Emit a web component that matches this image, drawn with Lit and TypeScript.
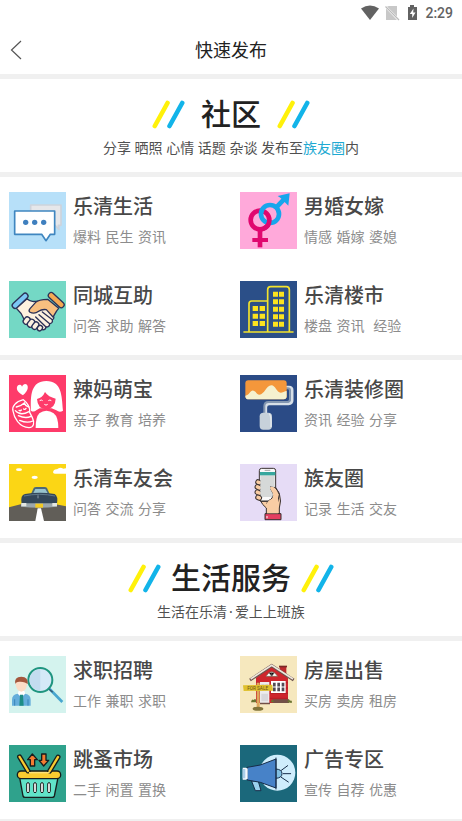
import { LitElement, html, css, svg } from "lit";
import type { SVGTemplateResult } from "lit";
import { customElement, property } from "lit/decorators.js";

interface Entry {
  title: string;
  tags: string;
  icon: string;
}

/* Tile drawings share a 171 x 171 canvas. */
const drawings: Record<string, SVGTemplateResult> = {
  chat: svg`
    <rect width="171" height="171" fill="#b7e0f9"/>
    <path d="M65 39H156V100H148L150 112L138 100H65Z" fill="#e6e7ea" stroke="#cdd3dc" stroke-width="5" stroke-linejoin="round"/>
    <path d="M17 57H137V127H124L111 146L98 127H17Z" fill="#fff" stroke="#3f86c0" stroke-width="5" stroke-linejoin="round"/>
    <g fill="#3f80bf"><circle cx="50" cy="91" r="8"/><circle cx="77" cy="91" r="8"/><circle cx="104" cy="91" r="8"/></g>`,
  handshake: svg`
    <rect width="171" height="171" fill="#74d8c5"/>
    <g stroke="#2b3157" stroke-width="4" stroke-linejoin="round" stroke-linecap="round">
      <path d="M22 82L54 53C66 64 76 62 88 60L120 84L132 104Q138 112 130 116Q132 127 122 128Q122 138 111 138Q109 148 99 146L88 142L46 116Q38 96 22 82Z" fill="#fdf1df"/>
      <path d="M116 55L149 82C138 94 136 104 132 108L112 86Q98 84 89 91Q76 101 62 93Q58 89 63 83L80 64Q88 56 116 55Z" fill="#f8bf80"/>
      <path d="M100 93L130 116M90 101L122 128M80 108L111 138" fill="none"/>
      <g fill="#fdf1df">
        <rect x="45" y="107" width="17" height="23" rx="8" transform="rotate(38 53 118)"/>
        <rect x="58" y="114" width="17" height="25" rx="8" transform="rotate(38 66 126)"/>
        <rect x="71" y="122" width="16" height="24" rx="8" transform="rotate(38 79 134)"/>
        <rect x="86" y="133" width="14" height="17" rx="7" transform="rotate(38 93 141)"/>
      </g>
      <rect x="4" y="51" width="58" height="17" rx="8" fill="#7cc7f5" transform="rotate(-43 33 59)"/>
      <rect x="113" y="49" width="58" height="17" rx="8" fill="#f4a953" transform="rotate(43 142 57)"/>
    </g>`,
  gender: svg`
    <rect width="171" height="171" fill="#ffa9da"/>
    <g fill="none" stroke-width="14">
      <circle cx="60" cy="84" r="28" stroke="#e0086f"/>
      <path d="M60 112V166" stroke="#e0086f"/>
      <path d="M37 144H84" stroke="#e0086f" stroke-width="12"/>
      <circle cx="90" cy="66" r="27" stroke="#17a6ec"/>
      <path d="M109 46L134 20" stroke="#17a6ec"/>
      <path d="M88 84A28 28 0 0 1 70 110" stroke="#e0086f"/>
    </g>
    <path d="M113 12L149 4L145 41L133 29L123 19Z" fill="#17a6ec"/>`,
  building: svg`
    <rect width="171" height="171" fill="#2b4f88"/>
    <path d="M83 151V26Q83 17 92 17H139Q148 17 148 26V151M27 151V68Q27 60 35 60H83M12 153H159" fill="none" stroke="#f3e32c" stroke-width="5" stroke-linecap="round"/>
    <path d="M99 32h15v15h-15zM117 32h15v15h-15zM99 55h15v15h-15zM117 55h15v15h-15zM99 77h15v15h-15zM117 77h15v15h-15zM99 100h15v15h-15zM117 100h15v15h-15zM99 122h15v15h-15zM117 122h15v15h-15zM38 75h16v15h-16zM59 75h16v15h-16zM38 98h16v15h-16zM59 98h16v15h-16zM38 120h16v15h-16zM59 120h16v15h-16z" fill="#fbe21f"/>`,
  mother: svg`
    <rect width="171" height="171" fill="#fe3b6a"/>
    <path d="M42 61C28 52 22 45 24 36C27 27 37 28 39 35C43 25 54 25 56 34C58 45 50 54 42 61Z" fill="#fff"/>
    <path d="M66 107C64 60 66 19 112 18C158 18 158 60 162 107Q152 114 142 106L128 100H92L82 106Q74 113 66 107Z" fill="#fff"/>
    <path d="M84 72Q101 68 108 51Q118 66 140 71Q139 101 111 103Q86 102 84 72Z" fill="#fe3b6a"/>
    <path d="M76 162Q76 124 89 110Q98 102 111 102Q126 102 136 110Q151 124 151 162Z" fill="#fe3b6a"/>
    <path d="M80 159Q80 126 91 115Q101 108 112 107Q124 108 134 115Q148 126 148 159Z" fill="#fff"/>
    <path d="M92 77q5-4 9 0M118 77q5-4 9 0M106 88q5 5 10 0" fill="none" stroke="#fff" stroke-width="3"/>
    <g fill="none" stroke="#fff" stroke-width="4" stroke-linecap="round">
      <path d="M43 74C20 80 8 94 12 108C15 128 30 156 60 158C74 158 78 144 70 128L62 112C64 96 56 84 43 74Z"/>
      <path d="M19 107Q34 124 60 110M22 96Q38 92 46 84Q50 94 60 96M30 106q4 3 7-1M44 102q4 3 7-2M28 122Q50 132 66 124M32 136Q54 146 72 138"/>
    </g>`,
  car: svg`
    <rect width="171" height="171" fill="#fbd615"/>
    <g fill="#fff"><ellipse cx="30" cy="17" rx="9" ry="4"/><ellipse cx="77" cy="40" rx="9" ry="5"/><path d="M132 24Q134 14 144 16Q152 8 163 14L171 13V29H140Q132 30 132 24Z"/></g>
    <path d="M0 130L35 121H140L171 127V171H0Z" fill="#615e58"/>
    <path d="M86 133H96L105 171H79Z" fill="#fff"/>
    <path d="M66 90L74 72Q76 69 82 69H106Q112 69 114 72L122 90Z" fill="#4b6878"/>
    <path d="M72 89L79 75H109L117 89Z" fill="#98c3cd"/>
    <path d="M38 119Q33 94 48 90Q92 82 137 90Q148 97 144 119L140 127H42Z" fill="#33475a"/>
    <path d="M45 96Q92 86 138 96" fill="none" stroke="#60798a" stroke-width="3"/>
    <path d="M36 118H144V128Q90 134 36 128Z" fill="#9ba7ad"/>
    <path d="M37 117h15v10h-15zM130 117h14v10h-14z" fill="#e3e6e2"/>
    <path d="M79 119h23v12h-23z" fill="#f3cb22"/><path d="M87 94v9" stroke="#b7c6ce" stroke-width="2"/>`,
  roller: svg`
    <rect width="171" height="171" fill="#2b4b86"/>
    <path d="M137 37H147Q156 37 156 46V76Q156 86 146 86H88Q77 86 77 97V116" fill="none" stroke="#d7dfe7" stroke-width="9"/>
    <path d="M137 40H143Q150 40 150 47V73Q150 81 142 81H86Q73 81 73 94V116" fill="none" stroke="#8396b0" stroke-width="6"/>
    <rect x="16" y="16" width="124" height="57" rx="9" fill="#f4973b"/>
    <path d="M16 62C27 63 31 45 40 47C49 48 48 59 58 59C74 59 78 31 94 31C107 31 110 54 123 53C132 52 133 48 140 48V64Q140 73 131 73H25Q16 73 16 62Z" fill="#f5f1cf"/>
    <rect x="59" y="113" width="37" height="51" rx="11" fill="#c7d1da"/><path d="M88 116Q94 122 93 156" fill="none" stroke="#e4e9ed" stroke-width="4"/>`,
  phone: svg`
    <rect width="171" height="171" fill="#e6dcf6"/>
    <g stroke="#38302f" stroke-width="3" stroke-linejoin="round">
      <path d="M58 104Q68 125 79 132V151H118V132Q125 112 118 88L104 66V112H62Z" fill="#f9cda4"/>
      <rect x="58" y="13" width="49" height="98" rx="7" fill="#fafafa"/>
      <path d="M118 92Q108 66 93 66Q87 67 89 74L97 88Q101 104 87 109L80 118H112Z" fill="#f9cda4"/>
      <g fill="#f9cda4"><rect x="47" y="48" width="18" height="14" rx="7" transform="rotate(24 56 55)"/><rect x="45" y="63" width="20" height="14" rx="7" transform="rotate(24 55 70)"/><rect x="45" y="79" width="20" height="14" rx="7" transform="rotate(24 55 86)"/><rect x="47" y="94" width="18" height="14" rx="7" transform="rotate(24 56 101)"/></g>
      <rect x="75" y="149" width="48" height="18" fill="#e43e60"/>
    </g>
    <path d="M61 34H104V70L90 67L91 76L99 91L97 99H66L61 92Z" fill="#d6d9d8"/><rect x="60" y="24" width="46" height="10" fill="#37a79e"/><path d="M74 19h17" stroke="#777" stroke-width="2"/><path d="M81 156v7" stroke="#fff" stroke-width="3"/>
    <path d="M80 118Q89 105 98 104L114 96V148H81V132Z" fill="#f9cda4"/>`,
  recruit: svg`
    <rect width="171" height="171" fill="#d4f3ee"/>
    <path d="M119 96L160 138" stroke="#48a6cf" stroke-width="8"/><path d="M119 98L131 109" stroke="#33566f" stroke-width="4"/>
    <circle cx="94" cy="72" r="36" fill="#d5e9f7" stroke="#1f957f" stroke-width="6"/>
    <path d="M94 40A32 32 0 0 0 94 104Z" fill="#c3dcf0"/>
    <path d="M9 149V131Q9 116 25 113H49Q65 116 65 131V149Z" fill="#65aedb"/>
    <path d="M26 113L37 124L49 113L46 105H29Z" fill="#fff"/><path d="M33 116H42L44 149H31Z" fill="#1d8d85"/>
    <path d="M17 130V149M57 130V149" stroke="#3884b9" stroke-width="3"/>
    <path d="M20 80Q20 68 37 67Q54 68 54 80Q55 104 37 107Q20 104 20 80Z" fill="#fcdcc6"/>
    <path d="M19 85Q14 62 37 62Q59 62 56 85Q49 76 31 77Q20 77 19 85Z" fill="#a4573d"/>`,
  house: svg`
    <rect width="171" height="171" fill="#f6e8be"/>
    <path d="M119 31H139V75H119Z" fill="#bd2a2d"/><path d="M117 29h24v5h-24z" fill="#7b2926"/>
    <path d="M48 65L95 31L144 65V141H48Z" fill="#ce252d"/>
    <path d="M48 80H144M48 96H144M48 112H144M48 127H144" stroke="#a71d26" stroke-width="2"/>
    <path d="M30 72L95 29L161 72" fill="none" stroke="#6b514c" stroke-width="9"/><path d="M32 69L95 28L159 69" fill="none" stroke="#eee6dc" stroke-width="5"/>
    <path d="M78 61Q95 33 113 61Z" fill="#fff" stroke="#765" stroke-width="2"/><path d="M95 47V61M87 50L95 61L103 50" stroke="#766" stroke-width="2"/>
    <path d="M60 78h28v63h-28z" fill="#ececed"/><path d="M64 84h9v21h-9zM76 84h8v21h-8zM64 113h20v23h-20z" fill="#d8d8db"/>
    <path d="M93 75h44v36h-44z" fill="#fff"/><path d="M99 80h8v26h-8zM112 80h8v26h-8zM125 80h8v26h-8z" fill="#514a55"/><path d="M97 93h39" stroke="#fff" stroke-width="3"/>
    <path d="M60 140h30v5h-30zM98 130h49v11h-49z" fill="#725047"/>
    <path d="M33 139q2-12 8-7q7-8 9 7zM92 139q3-12 9-5v5zM142 139q4-14 8-5q8-2 5 7z" fill="#697331"/>
    <path d="M50 80h9v82h-9z" fill="#dda95e"/><ellipse cx="54" cy="158" rx="16" ry="6" fill="#81743b"/>
    <path d="M9 88L97 86L99 104L11 105Z" fill="#dfc02d"/><text x="53" y="101" text-anchor="middle" font-family="Roboto, sans-serif" font-size="14" fill="#68511c">FOR SALE</text>`,
  basket: svg`
    <rect width="171" height="171" fill="#2fa28c"/>
    <g stroke="#171d1c" stroke-width="4" stroke-linejoin="round">
      <path d="M32 98H147L136 153Q135 157 130 157H48Q43 157 42 153Z" fill="#61e3c8"/>
      <rect x="25" y="78" width="130" height="23" rx="11" fill="#f9cb30"/>
      <rect x="39" y="27" width="11" height="60" rx="5" fill="#f9cb30" transform="rotate(-31 44 57)"/>
      <rect x="129" y="27" width="11" height="60" rx="5" fill="#f9cb30" transform="rotate(31 134 57)"/>
      <path d="M70 27L85 44H77V63H64V44H56Z" fill="#f47c32"/>
      <path d="M104 63L119 46H111V27H98V46H90Z" fill="#f47c32"/>
      <g fill="#fff" stroke-width="3"><rect x="53" y="113" width="8" height="30" rx="4"/><rect x="74" y="113" width="8" height="30" rx="4"/><rect x="95" y="113" width="8" height="30" rx="4"/><rect x="116" y="113" width="8" height="30" rx="4"/></g>
    </g>
    <path d="M60 83H122" stroke="#fbe078" stroke-width="4"/>`,
  megaphone: svg`
    <rect width="171" height="171" fill="#1b687b"/>
    <circle cx="112" cy="83" r="54" fill="#ceedfc"/>
    <g stroke="#172d49" stroke-width="3" stroke-linejoin="round" stroke-linecap="round">
      <path d="M35 109L46 137L63 137L55 109Z" fill="#9bd0ed"/>
      <path d="M108 72Q126 73 126 86Q126 99 108 100Z" fill="#82c0e2"/>
      <path d="M22 67L61 60L108 42V129L61 112L22 105Z" fill="#4782c8"/>
      <path d="M108 39V132M124 76L143 62M130 86H152M124 97L145 111" fill="none"/>
    </g>
    <path d="M8 68H18L23 71V101L18 104H8Z" fill="#f6faff"/><path d="M8 72h8v28h-8z" fill="#aacfe9"/>`,
};

const lifeTop: Entry[] = [
  { title: "乐清生活", tags: "爆料 民生 资讯", icon: "chat" },
  { title: "男婚女嫁", tags: "情感 婚嫁 婆媳", icon: "gender" },
  { title: "同城互助", tags: "问答 求助 解答", icon: "handshake" },
  { title: "乐清楼市", tags: "楼盘 资讯  经验", icon: "building" },
];

const lifeBottom: Entry[] = [
  { title: "辣妈萌宝", tags: "亲子 教育 培养", icon: "mother" },
  { title: "乐清装修圈", tags: "资讯 经验 分享", icon: "roller" },
  { title: "乐清车友会", tags: "问答 交流 分享", icon: "car" },
  { title: "族友圈", tags: "记录 生活 交友", icon: "phone" },
];

const services: Entry[] = [
  { title: "求职招聘", tags: "工作 兼职 求职", icon: "recruit" },
  { title: "房屋出售", tags: "买房 卖房 租房", icon: "house" },
  { title: "跳蚤市场", tags: "二手 闲置 置换", icon: "basket" },
  { title: "广告专区", tags: "宣传 自荐 优惠", icon: "megaphone" },
];

@customElement("section-banner")
export class SectionBanner extends LitElement {
  @property() heading = "";
  @property({ type: Boolean, reflect: true }) compact = false;

  static styles = css`
    :host { display: block; background: #fff; padding: 17px 0 13px; text-align: center; }
    .row { display: flex; justify-content: center; align-items: center; gap: 16px; }
    :host([compact]) .row { gap: 10px; }
    .heading { margin: 0; font-size: 30px; line-height: 36px; font-weight: 500; color: #222; }
    .slashes { width: 33px; height: 29px; }
    .note { margin: 0; padding-top: 5px; font-size: 14px; line-height: 22px; color: #505050; }
  `;

  private slashes() {
    return html`<svg class="slashes" viewBox="0 0 33 29" aria-hidden="true">
      <g stroke-width="4.600" stroke-linecap="round">
        <path d="M2.800 26L15.500 3" stroke="#fff10a" />
        <path d="M17.500 26L30.200 3" stroke="#12b4e9" />
      </g>
    </svg>`;
  }

  render() {
    return html`
      <div class="row">${this.slashes()}<h2 class="heading">${this.heading}</h2>${this.slashes()}</div>
      <p class="note"><slot></slot></p>
    `;
  }
}

@customElement("entry-grid")
export class EntryGrid extends LitElement {
  @property({ attribute: false }) entries: Entry[] = [];

  static styles = css`
    :host { display: block; background: #fff; }
    .grid { display: grid; grid-template-columns: 1fr 1fr; row-gap: 32px; padding: 15px 0 17px; }
    .entry { display: flex; gap: 7px; padding-left: 9px; color: inherit; text-decoration: none; }
    .icon { flex: none; width: 57px; height: 57px; }
    .text { display: flex; flex-direction: column; gap: 3px; white-space: pre; }
    .title { font-size: 20px; line-height: 30px; font-weight: 500; color: #484848; }
    .tags { font-family: "DejaVu Sans", "Noto Sans CJK SC", sans-serif; font-size: 14px; line-height: 24px; color: #8c8c8c; }
  `;

  render() {
    return html`<nav class="grid">
      ${this.entries.map(
        (e) => html`<a class="entry" href="#${e.icon}">
          <svg class="icon" viewBox="0 0 171 171" aria-hidden="true">${drawings[e.icon]}</svg>
          <span class="text"><span class="title">${e.title}</span><span class="tags">${e.tags}</span></span>
        </a>`
      )}
    </nav>`;
  }
}

@customElement("app-root")
export class AppRoot extends LitElement {
  static styles = css`
    :host {
      display: flex;
      flex-direction: column;
      gap: 5px;
      min-height: 100vh;
      background: #f0f0f0;
      font-family: "Noto Sans", "Noto Sans CJK SC", sans-serif;
    }
    .top { background: #fff; }
    .status { display: flex; justify-content: flex-end; align-items: center; height: 25px; padding-right: 9px; color: #626262; }
    .signals { width: 58px; height: 16px; margin-right: 6px; }
    .time { font-family: Roboto, sans-serif; font-size: 14px; line-height: 16px; font-weight: 500; }
    .bar { display: grid; grid-template-columns: 32px 1fr 32px; align-items: center; height: 49px; }
    .back { display: flex; justify-content: center; padding: 8px 0; border: 0; background: none; }
    .chevron { width: 12px; height: 20px; }
    .name { margin: 0; text-align: center; font-size: 18px; line-height: 26px; font-weight: 400; color: #222; }
    .link { color: #20a9d2; text-decoration: none; }
    .dot { padding: 0 2px; }
    main { display: flex; flex-direction: column; gap: 5px; }
  `;

  render() {
    return html`
      <header class="top">
        <div class="status">
          <svg class="signals" viewBox="0 0 58 16" aria-hidden="true">
            <path d="M0 3.500Q9 -2.500 18 3.500L9 15Z" fill="#626262" />
            <path d="M28 1H36V11.500L26 1.500ZM25 3.500L36 15H25Z" fill="#c8c8c8" />
            <path d="M24.500 1.500L38 15" stroke="#bbb" stroke-width="1.200" />
            <path d="M49 0H53V2H56V15H47V2H49Z" fill="#626262" />
            <path d="M52.500 3.500L48.800 9H51.200V13L54.500 7.500H52.200Z" fill="#fff" />
          </svg>
          <span class="time">2:29</span>
        </div>
        <div class="bar">
          <button class="back" aria-label="返回">
            <svg class="chevron" viewBox="0 0 12 20"><path d="M11 1L1.500 10L11 19" fill="none" stroke="#555" stroke-width="1.200" /></svg>
          </button>
          <h1 class="name">快速发布</h1>
        </div>
      </header>
      <main>
        <section-banner heading="社区">分享 晒照 心情 话题 杂谈 发布至<a class="link" href="#circle">族友圈</a>内</section-banner>
        <entry-grid .entries=${lifeTop}></entry-grid>
        <entry-grid .entries=${lifeBottom}></entry-grid>
        <section-banner heading="生活服务" compact>生活在乐清<span class="dot">·</span>爱上上班族</section-banner>
        <entry-grid .entries=${services}></entry-grid>
      </main>
    `;
  }
}
